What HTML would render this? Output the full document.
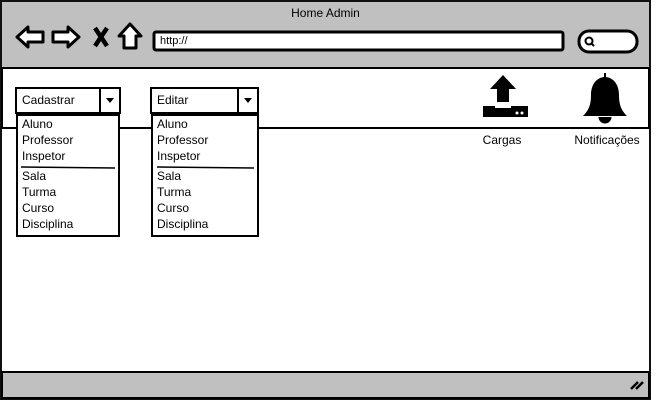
<!DOCTYPE html>
<html><head><meta charset="utf-8"><style>
body{margin:0;width:671px;height:400px;background:#fff;position:relative;overflow:hidden;font-family:"Liberation Sans",sans-serif;font-size:12px;color:#000}
div{position:absolute;box-sizing:border-box}
.t{white-space:nowrap;line-height:14px}
</style></head><body>
<div style="left:0;top:0;width:651px;height:400px;border:2px solid #111"></div>
<div style="left:2px;top:2px;width:647px;height:65px;background:#c0c0c0"></div>
<div class="t" style="left:0;width:651px;top:6px;text-align:center">Home Admin</div>
<svg style="position:absolute;left:0;top:0" width="671" height="400">
<g fill="#fff" stroke="#000" stroke-width="3" stroke-linejoin="round">
<path d="M17 37 L28 27 L28 32 L43 32 L43 42 L28 42 L28 47 Z"/>
<path d="M79 37 L68 27 L68 32 L53 32 L53 42 L68 42 L68 47 Z"/>
<path d="M130 24 L141 36 L136 36 L136 48 L124 48 L124 36 L119 36 Z"/>
<rect x="154" y="32" width="409" height="18" rx="2"/>
<rect x="579" y="31" width="58" height="21" rx="10"/>
</g>
<path d="M95 28 L107 46 M107 28 L95 46" stroke="#000" stroke-width="4.5"/>
<circle cx="589" cy="41" r="3.5" fill="none" stroke="#000" stroke-width="2"/>
<path d="M591 43 L594 46" stroke="#000" stroke-width="2"/>
<rect x="2" y="68" width="647" height="60" fill="#fff" stroke="#000" stroke-width="2"/>
<rect x="2" y="372" width="647" height="26" fill="#c0c0c0" stroke="#000" stroke-width="2"/>
<path d="M631 389 L638 382 M636 389 L643 382" stroke="#000" stroke-width="2.5"/>
<g fill="#fff" stroke="#000" stroke-width="2">
<rect x="16" y="88" width="104" height="25"/><line x1="100" y1="88" x2="100" y2="113"/>
<rect x="151" y="88" width="107" height="25"/><line x1="238" y1="88" x2="238" y2="113"/>
<rect x="17" y="115" width="102" height="121"/>
<rect x="152" y="115" width="106" height="121"/>
</g>
<path d="M106 98 L114 98 L110 103 Z M244 98 L252 98 L248 103 Z" fill="#000"/>
<path d="M21 167 L115 168 M157 167 L254 168" stroke="#000" stroke-width="1.5"/>
<path d="M503 75 L516 89 L509 89 L509 102 L497 102 L497 89 L490 89 Z" fill="#000"/>
<path d="M483 106 L495 106 L495 108 L511 108 L511 106 L528 106 L528 117 L483 117 Z" fill="#000"/>
<circle cx="517" cy="113" r="1.5" fill="#fff"/><circle cx="522" cy="113" r="1.5" fill="#fff"/>
<path d="M604 73 L604 77 C596 78 591 85 591 95 C591 106 588 111 583 116 L627 116 C622 111 619 106 619 95 C619 85 614 78 606 77 L606 73 Z" fill="#000"/>
<path d="M599 117 A6 6 0 0 0 611 117" fill="#000" stroke="#000" stroke-width="1"/>
</svg>
<div class="t" style="left:160px;top:34px;font-size:11px">http://</div>
<div class="t" style="left:22px;top:93px">Cadastrar</div>
<div class="t" style="left:157px;top:93px">Editar</div>
<div class="t" style="left:22px;top:116px;line-height:16px">Aluno<br>Professor<br>Inspetor<br><span style="display:block;height:4px"></span>Sala<br>Turma<br>Curso<br>Disciplina</div>
<div class="t" style="left:157px;top:116px;line-height:16px">Aluno<br>Professor<br>Inspetor<br><span style="display:block;height:4px"></span>Sala<br>Turma<br>Curso<br>Disciplina</div>
<div class="t" style="left:470px;width:64px;text-align:center;top:133px">Cargas</div>
<div class="t" style="left:567px;width:80px;text-align:center;top:133px">Notificações</div>
</body></html>
